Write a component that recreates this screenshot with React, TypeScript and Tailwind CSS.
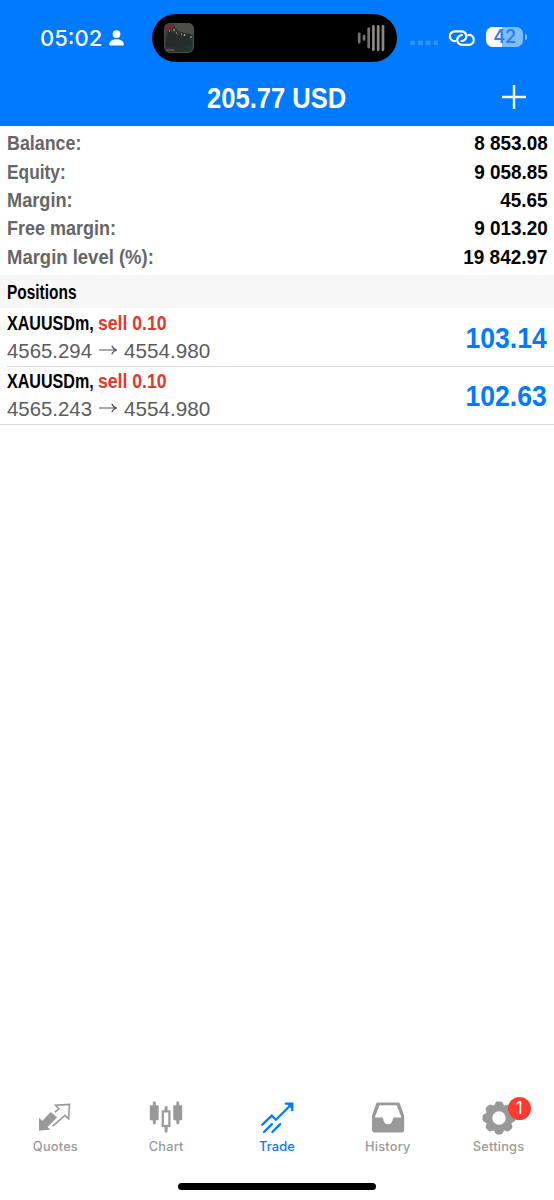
import type { ReactNode } from "react";

type FitProps = { box: string; scale: string; right?: boolean; children: ReactNode };

/** Condensed text run: a fixed-width box holding horizontally squeezed type. */
function Fit({ box, scale, right, children }: FitProps) {
  return (
    <span className={`flex shrink-0 whitespace-nowrap ${right ? "justify-end" : "justify-start"} ${box}`}>
      <span className={`block ${right ? "origin-right" : "origin-left"} ${scale}`}>{children}</span>
    </span>
  );
}

const summary = [
  { label: "Balance:", value: "8 853.08", scale: "scale-x-[0.85]" },
  { label: "Equity:", value: "9 058.85", scale: "scale-x-[0.825]" },
  { label: "Margin:", value: "45.65", scale: "scale-x-[0.865]" },
  { label: "Free margin:", value: "9 013.20", scale: "scale-x-[0.857]" },
  { label: "Margin level (%):", value: "19 842.97", scale: "scale-x-[0.88]" },
];

const positions = [
  { open: "4565.294", current: "4554.980", profit: "103.14" },
  { open: "4565.243", current: "4554.980", profit: "102.63" },
];

function StatusBar() {
  return (
    <div className="flex h-[76px] pt-[14px]">
      <div className="flex h-12 w-[152px] shrink-0 items-center pl-[40px] font-['Inter'] text-[22px] font-medium tracking-normal text-white">
        <span className="w-[69px]">05:02</span>
        <svg viewBox="0 0 15 16" className="h-4 w-[15px]" fill="white">
          <circle cx="7.5" cy="4.1" r="3.9" />
          <path d="M0.2 14.2C0.4 11 3.6 9.2 7.5 9.2s7.100 1.800 7.300 5c0 .9-.5 1.300-1.300 1.300h-12C.7 15.500.2 15.100.2 14.200Z" />
        </svg>
      </div>
      <div className="flex h-12 w-[245px] shrink-0 items-center justify-between rounded-full bg-black pr-[12px] pl-[12px]">
        <svg viewBox="0 0 30 30" className="size-[30px]">
          <defs>
            <clipPath id="cover"><rect width="30" height="30" rx="6" /></clipPath>
            <linearGradient id="dusk" x1="0" y1="0" x2="1" y2="1">
              <stop offset="0" stopColor="#494544" />
              <stop offset="0.5" stopColor="#2b2f2d" />
              <stop offset="1" stopColor="#173d2b" />
            </linearGradient>
          </defs>
          <g clipPath="url(#cover)">
            <rect width="30" height="30" fill="url(#dusk)" />
            <path d="M9 0h21v12L14 8Z" fill="#504e49" />
            <path d="M1 2l7-1 1 4-5 3Z" fill="#792b2b" />
            <path d="M4 8l7 2 4 7 7-4 5 7-10 5-16-2Z" fill="#252c2c" />
            <path d="M5 8h1M9 7h2M12 10h1M17 11h1M20 13l1-2M26 14h2" stroke="#b9b9ac" strokeWidth="1.2" />
            <path d="M2 27h8" stroke="#777" strokeWidth="1" />
            <rect x="0.5" y="0.5" width="29" height="29" rx="5.500" fill="none" stroke="#4c4c4c" />
          </g>
        </svg>
        <svg viewBox="0 0 28 28" className="size-7" fill="none" stroke="#77736d" strokeWidth="2.700" strokeLinecap="round">
          <path d="M2.200 9.800v8.400M7 12v3.500M11.700 4.700v18.500" />
          <path d="M16.400 2.300v23.500M21.200 2.300v23.500M26 2.300v23.500" stroke="#8c877f" />
        </svg>
      </div>
      <div className="flex h-12 grow items-center">
        <svg viewBox="0 0 28 6" className="mt-[10px] ml-[13px] h-[6px] w-7" fill="#3395ff">
          <rect x="0" y="0.500" width="5" height="4.500" rx="1.500" />
          <rect x="7.800" y="0.500" width="5" height="4.500" rx="1.500" />
          <rect x="15.600" y="0.500" width="5" height="4.500" rx="1.500" />
          <rect x="23.400" y="0.500" width="5" height="4.500" rx="1.500" />
        </svg>
        <svg viewBox="0 0 28 18" className="ml-[10px] h-[18px] w-7" fill="none" stroke="white" strokeWidth="2.200" strokeLinecap="round">
          <path d="M7.200 12.200A4.950 4.950 0 0 1 6.400 2.300H13.500A4.850 4.850 0 0 1 16.800 10.700Q15.500 12 13.500 12" />
          <path d="M20.400 5.900A4.950 4.950 0 0 1 21.200 15.800H14A4.850 4.850 0 0 1 10.800 7.400Q12.100 6.100 14 6.100" />
        </svg>
        <div className="-mt-[2px] ml-[10px] flex h-5 w-[37px] items-center justify-center rounded-[6.500px] bg-[linear-gradient(90deg,#fff_43%,#80bdff_43%)] font-['Inter'] text-[18px] leading-5 font-semibold tracking-[-0.400px] text-[#2583ef]">
          42
        </div>
        <div className="-mt-[2px] ml-[1.500px] h-[6px] w-[2px] rounded-r-full bg-[#80bdff]" />
      </div>
    </div>
  );
}

function Header() {
  return (
    <header className="h-[126px] bg-[#007aff]">
      <StatusBar />
      <div className="grid h-[44px] grid-cols-[1fr_140px_1fr] items-center text-white">
        <span />
        <h1 className="flex text-[30px] leading-[44px] font-bold">
          <Fit box="w-[140px]" scale="scale-x-[0.852]">205.77 USD</Fit>
        </h1>
        <svg viewBox="0 0 24 24" className="mr-[28px] mb-[2px] size-6 justify-self-end" stroke="white" strokeWidth="2.400" strokeLinecap="butt">
          <path d="M12 0v24M0 12h24" />
        </svg>
      </div>
    </header>
  );
}

function Arrow() {
  return (
    <svg viewBox="0 0 19 10" className="mb-[2px] h-[10px] w-[19px]" fill="none" stroke="#55565a" strokeWidth="1.200">
      <path d="M0 5h17.800M12.800 0.800c.8 2.300 2.600 3.600 5 4.200-2.400.6-4.200 1.900-5 4.200" />
    </svg>
  );
}

function QuotesIcon() {
  return (
    <svg viewBox="0 0 34 30" className="h-[30px] w-[34px]" fill="#999">
      <path d="M1 14.700l3.400 3L12.700 9l6.400 5.600-9.600 9.300 3 2.700L1 27.700Z" />
      <path d="M17 9.200l4-3.600-3.500-3.400 14-.8-.9 14.400-3.600-3.400L14.700 23.200" fill="none" stroke="#999" strokeWidth="1.600" />
    </svg>
  );
}

function ChartIcon() {
  return (
    <svg viewBox="0 0 34 34" className="h-[34px] w-[34px]" fill="#999">
      <rect x="0.800" y="4.300" width="8.900" height="15" rx="1" />
      <rect x="24.300" y="4.300" width="8.900" height="15" rx="1" />
      <path d="M5.300 1.900v20M28.800 1.900v20M17.100 6.500v5M17.100 25.500v4.700" stroke="#999" strokeWidth="2.900" strokeLinecap="round" />
      <rect x="13.800" y="10.400" width="6.600" height="14.600" fill="white" stroke="#999" strokeWidth="2.200" />
    </svg>
  );
}

function TradeIcon() {
  return (
    <svg viewBox="0 0 34 32" className="h-8 w-[34px]" fill="none" stroke="#007aff" strokeWidth="2.300">
      <path d="M1.500 23.300L11.800 13.700l4.100 4L31 2.800" />
      <path d="M24.800 1.600h7.500v7.300" />
      <path d="M26.500 1.500h6v6Z" fill="#007aff" strokeWidth="0.500" />
      <path d="M4 30l7.900-7.900M12.300 30l7.900-7.900" strokeLinecap="round" />
    </svg>
  );
}

function HistoryIcon() {
  return (
    <svg viewBox="0 0 34 32" className="h-8 w-[34px]">
      <path fillRule="evenodd" fill="#999" d="M7.500 .6h19c1.300 0 2.200.6 2.700 1.800l3.600 10c.3.800.4 1.500.4 2.300V27.600c0 2-1 3-3 3H4c-2 0-3-1-3-3V14.700c0-.8.1-1.500.4-2.300l3.500-10C5.300 1.200 6.200.6 7.500.6ZM8.500 3.200 3.700 15.600h7.500c.5 0 .8.300.9.800.4 3.800 2.200 5.900 5 5.900s4.500-2.100 4.900-5.900c.1-.5.4-.8.9-.8h7.600L25.700 3.200Z" />
    </svg>
  );
}

function SettingsIcon() {
  const angles = [0, 45, 90, 135, 180, 225, 270, 315];
  return (
    <svg viewBox="0 0 34 34" className="size-[34px]">
      <g fill="#999">
        {angles.map((a) => (
          <path key={a} d="M11.700 5 13.300 2Q13.900.6 15.300.6h3.400q1.400 0 2 1.400L22.300 5Z" transform={`rotate(${a} 17 17)`} />
        ))}
      </g>
      <circle cx="17" cy="17" r="9.950" fill="none" stroke="#999" strokeWidth="6.500" />
    </svg>
  );
}

const tabs = [
  { name: "Quotes", icon: <QuotesIcon /> },
  { name: "Chart", icon: <ChartIcon /> },
  { name: "Trade", icon: <TradeIcon />, active: true },
  { name: "History", icon: <HistoryIcon /> },
  { name: "Settings", icon: <SettingsIcon />, badge: 1 },
];

export default function App() {
  return (
    <div className="flex h-[1200px] w-[554px] flex-col overflow-hidden bg-white font-['Liberation_Sans',sans-serif]">
      <Header />
      <section className="h-[149.400px] pt-[3.300px]">
        {summary.map((row) => (
          <div key={row.label} className="flex justify-between pr-[6.600px] pl-[6.600px] text-[21px] leading-[28.350px] font-bold">
            <span className="text-[#666]">
              <Fit box="w-[160px]" scale={row.scale}>{row.label}</Fit>
            </span>
            <span className="text-black">
              <Fit box="w-[100px]" scale="scale-x-[0.9]" right>{row.value}</Fit>
            </span>
          </div>
        ))}
      </section>
      <h2 className="h-[33.100px] bg-[#f7f7f7] pt-[1px] pl-[6.600px] text-[19.500px] leading-[33px] font-bold text-black">
        <Fit box="w-[80px]" scale="scale-x-[0.792]">Positions</Fit>
      </h2>
      <section className="pt-[0.600px]">
        {positions.map((p, i) => (
          <div key={p.open}>
            <div className="flex h-[57px] items-start justify-between pr-[7px] pl-[6.600px]">
              <div>
                <div className="flex h-[28px] text-[20.500px] leading-[28px] font-bold text-black">
                  <Fit box="w-[91.400px]" scale="scale-x-[0.785]">XAUUSDm,</Fit>
                  <span className="text-[#e5382c]">
                    <Fit box="w-[70px]" scale="scale-x-[0.86]">sell 0.10</Fit>
                  </span>
                </div>
                <div className="flex h-[27px] items-center text-[21px] leading-[26px] text-[#5a5b5f]">
                  <Fit box="w-[92px]" scale="scale-x-[0.97]">{p.open}</Fit>
                  <Arrow />
                  <span className="ml-[6px] flex">
                    <Fit box="w-[90px]" scale="scale-x-[0.985]">{p.current}</Fit>
                  </span>
                </div>
              </div>
              <span className="text-[30px] leading-[57px] font-bold text-[#007aff]">
                <Fit box="w-[100px]" scale="scale-x-[0.885]" right>{p.profit}</Fit>
              </span>
            </div>
            <div className={`h-px bg-[#dcdcde] ${i === positions.length - 1 ? "" : "ml-[7px]"}`} />
          </div>
        ))}
      </section>
      <div className="grow" />
      <nav className="grid h-[84px] grid-cols-5 font-['Inter'] text-[12.800px] font-medium tracking-[0.200px]">
        {tabs.map((t) => (
          <div key={t.name} className={`flex flex-col items-center ${t.active ? "text-[#007aff]" : "text-[#999]"}`}>
            <div className="relative flex h-[37px] items-center">
              {t.icon}
              {t.badge && (
                <span className="absolute -top-[2px] left-[26px] flex size-[23px] items-center justify-center rounded-full bg-[#ff3b30] text-[17px] font-normal tracking-normal text-white">
                  {t.badge}
                </span>
              )}
            </div>
            <span className="pt-[2px] leading-[18px]">{t.name}</span>
          </div>
        ))}
      </nav>
      <div className="flex h-[17px] justify-center">
        <div className="h-[6.500px] w-[198px] rounded-full bg-black" />
      </div>
    </div>
  );
}
